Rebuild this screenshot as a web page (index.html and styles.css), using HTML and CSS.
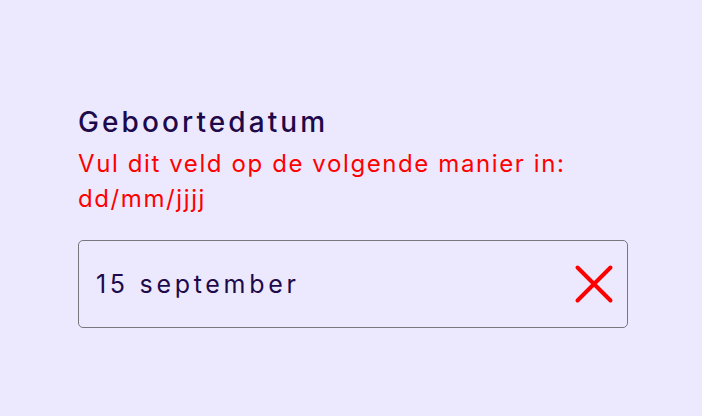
FILE: index.html
```html
<!DOCTYPE html>
<html lang="nl">
<head>
<meta charset="utf-8">
<link rel="stylesheet" href="styles.css">
</head>
<body>
<div class="page">
  <div class="field">
    <label class="label" for="dob">Geboortedatum</label>
    <p class="error">Vul dit veld op de volgende manier in:<br>dd/mm/jjjj</p>
    <div class="input">
      <span class="value">15 september</span>
      <svg class="icon" width="40" height="40" viewBox="0 0 40 40" aria-hidden="true">
        <path d="M3.5 3.5 L36.5 36.5 M36.5 3.5 L3.5 36.5" stroke="#ff0000" stroke-width="4" stroke-linecap="round" fill="none"/>
      </svg>
    </div>
  </div>
</div>
</body>
</html>
```
FILE: styles.css
```css
html, body {
  margin: 0;
  padding: 0;
  background: #ece9fe;
}
.page {
  width: 702px;
  height: 416px;
  padding: 104px 0 0 78px;
  box-sizing: border-box;
  font-family: Inter, "Noto Sans", sans-serif;
}
.field {
  width: 550px;
  display: flex;
  flex-direction: column;
}
.label {
  font-size: 28px;
  font-weight: 500;
  letter-spacing: 3.1px;
  color: #1e0a4a;
  line-height: 36px;
}
.error {
  margin: 6px 0 0 0;
  font-size: 24px;
  letter-spacing: 1.6px;
  line-height: 35px;
  color: #ff0000;
}
.input {
  margin-top: 24px;
  height: 88px;
  box-sizing: border-box;
  border: 1.5px solid #77777f;
  border-radius: 5px;
  display: flex;
  align-items: center;
  justify-content: space-between;
  padding: 0 13px 0 17px;
}
.value {
  font-size: 25px;
  letter-spacing: 3.7px;
  color: #1e0a4a;
}
.icon {
  display: block;
}
```
